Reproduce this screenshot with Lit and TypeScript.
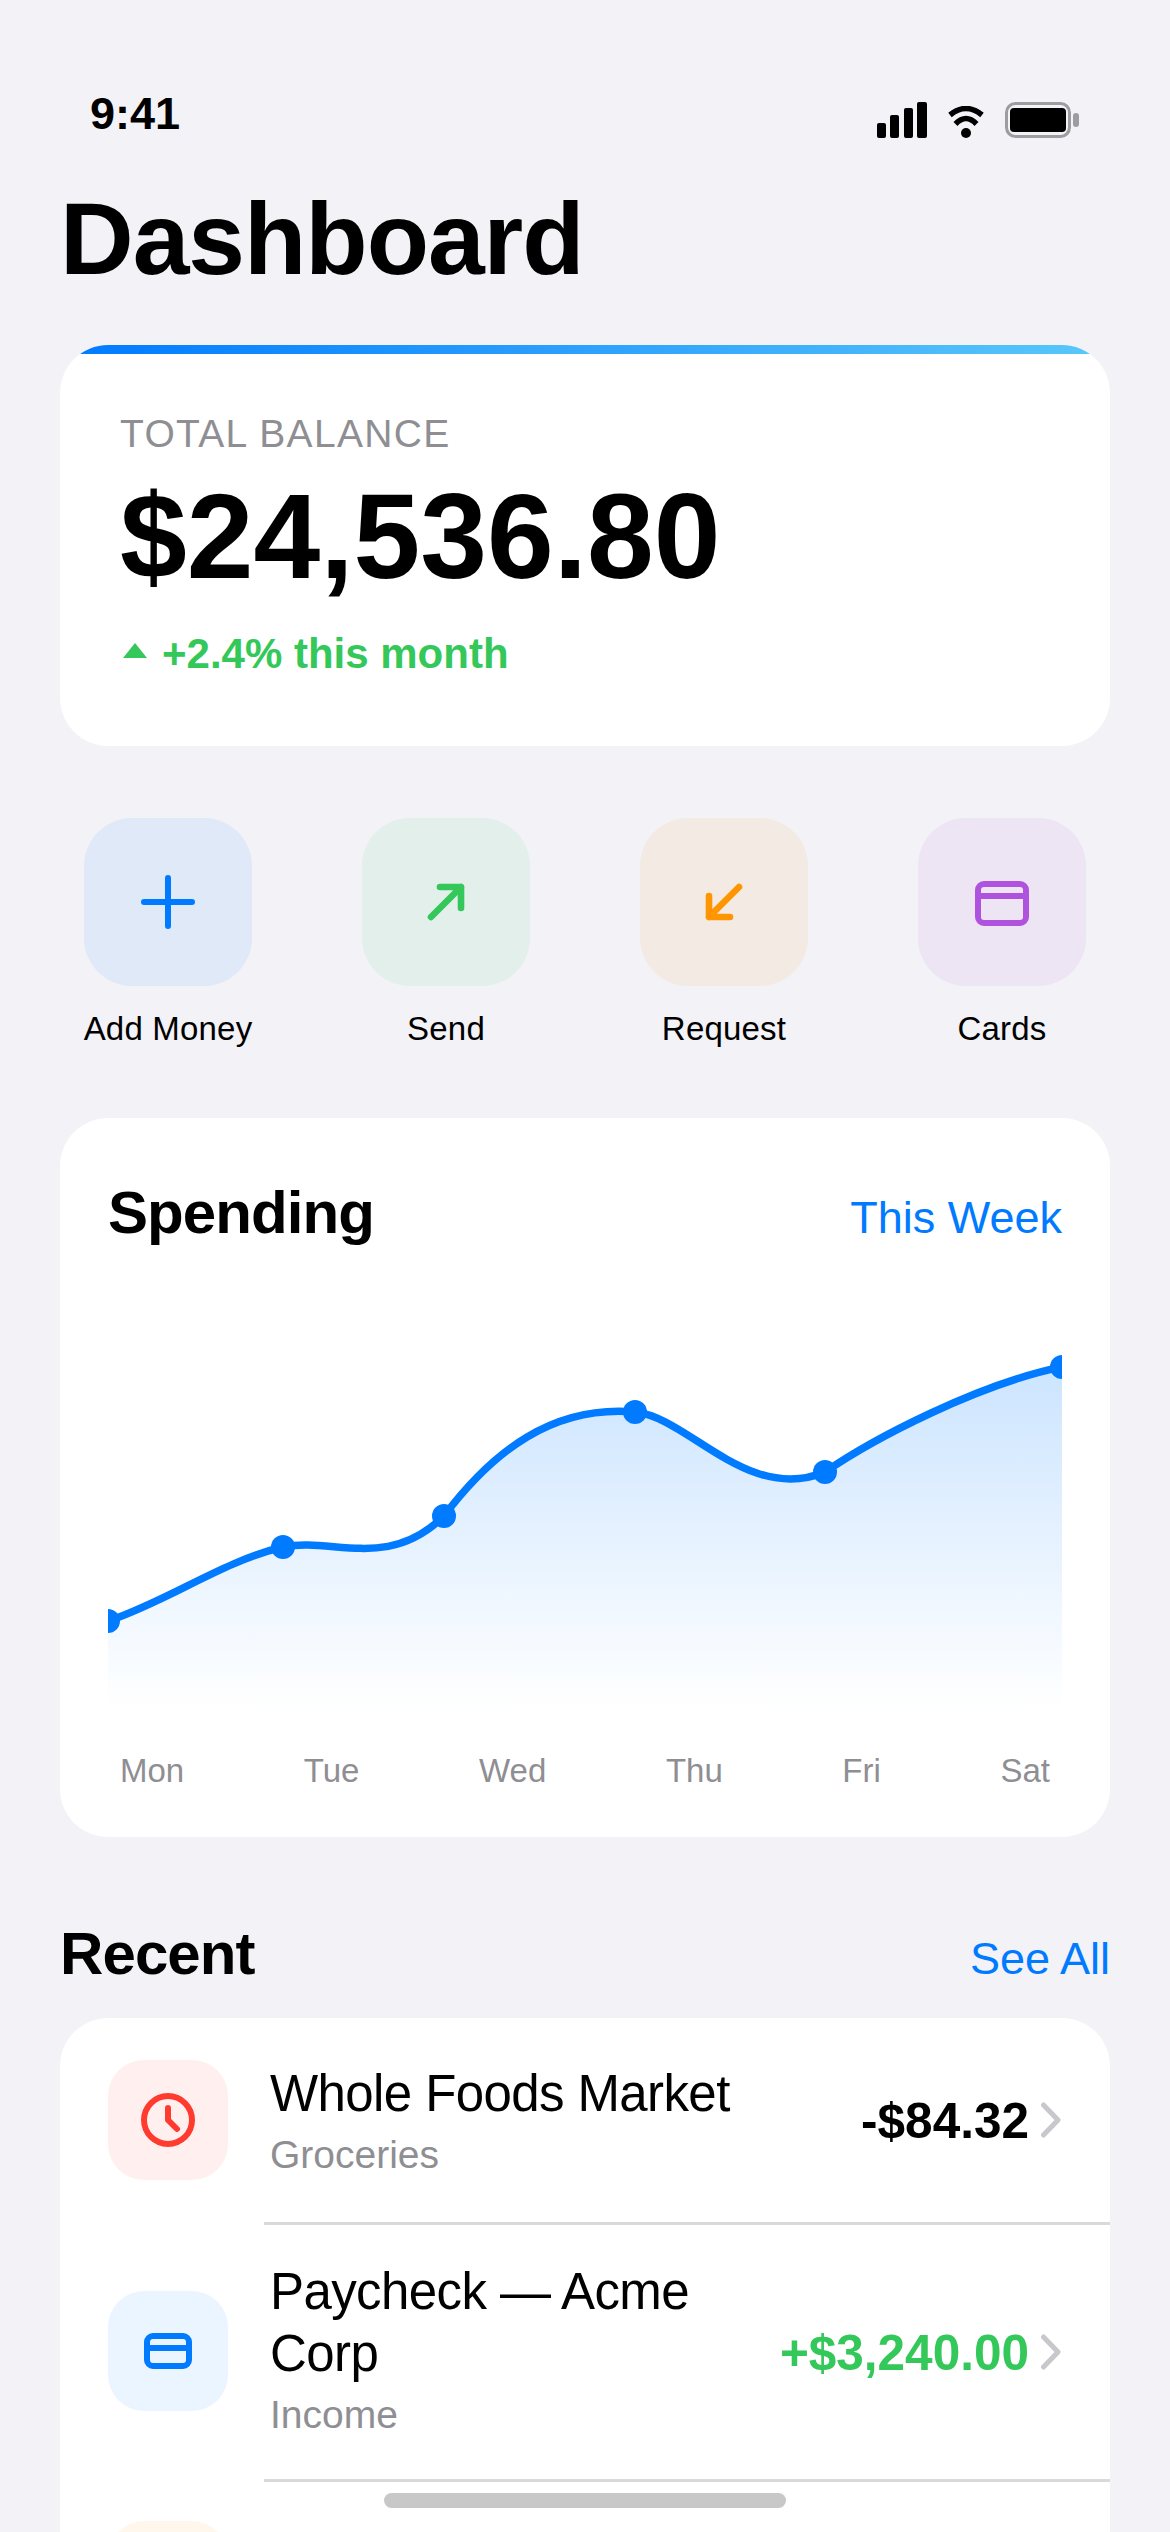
import { LitElement, html, css, svg } from "lit";
import { customElement } from "lit/decorators.js";

const W = 954;
const BOTTOM = 370;
const CURVE =
  "M0 282 C60 262 115 222 175 208 C225 198 280 232 336 177 C385 112 445 66 527 73 C580 78 640 165 717 133 C765 100 870 45 954 28";
const POINTS: [number, number][] = [
  [0, 282],
  [175, 208],
  [336, 177],
  [527, 73],
  [717, 133],
  [954, 28],
];
const DAYS = ["Mon", "Tue", "Wed", "Thu", "Fri", "Sat"];

const icon = (body: unknown) => html`<svg class="glyph" viewBox="0 0 24 24">${body}</svg>`;

const ACTIONS = [
  { label: "Add Money", tint: "blue", body: svg`<path d="M12 4v16M4 12h16" />` },
  { label: "Send", tint: "green", body: svg`<path stroke-width="2.2" d="M7 17 17 7M10 7h7v7" />` },
  { label: "Request", tint: "orange", body: svg`<path stroke-width="2.2" d="M17 7 7 17M7 10v7h7" />` },
  {
    label: "Cards",
    tint: "purple",
    body: svg`<rect x="4" y="6" width="16" height="13" rx="2" /><path d="M4 10h16" />`,
  },
];

const chevron = html`<svg class="chev" viewBox="0 0 24 36"><path d="M5.5 3 20 18 5.5 33" /></svg>`;

@customElement("app-root")
export class AppRoot extends LitElement {
  static styles = css`
    :host {
      display: block;
      position: relative;
      width: 1170px;
      height: 2532px;
      overflow: hidden;
      background: #f2f2f7;
      color: #000;
      font-family: "Liberation Sans", Arial, sans-serif;
    }
    .status {
      display: flex;
      justify-content: space-between;
      padding: 88px 91px 0 90px;
    }
    .time {
      font-size: 45px;
      font-weight: 700;
    }
    .status-icons {
      display: flex;
      align-items: flex-end;
      height: 50px;
      gap: 21px;
    }
    .status-icons svg {
      display: block;
    }
    .title {
      margin: 41px 0 47px 60px;
      font-size: 102px;
      font-weight: 700;
      letter-spacing: -1.02px;
      line-height: 117px;
    }
    .card {
      margin: 0 60px;
      background: #fff;
      border-radius: 48px;
      overflow: hidden;
    }
    .stripe {
      height: 9px;
      background: linear-gradient(90deg, #007aff, #5ac8fa);
    }
    .balance-body {
      padding: 58px 60px 68px;
    }
    .balance-label {
      font-size: 39px;
      letter-spacing: 1.3px;
      color: #8e8e93;
    }
    .balance-amount {
      margin-top: 11px;
      font-size: 120px;
      font-weight: 700;
    }
    .delta {
      display: flex;
      align-items: center;
      gap: 12px;
      margin-top: 25px;
      font-size: 42px;
      font-weight: 700;
      color: #34c759;
    }
    .delta svg {
      display: block;
      width: 30px;
      height: 15px;
      margin-top: -8px;
      fill: #34c759;
    }
    .actions {
      display: flex;
      justify-content: space-between;
      margin: 72px 0 70px;
      padding: 0 84px;
    }
    .action {
      display: flex;
      flex-direction: column;
      align-items: center;
      gap: 24px;
      width: 168px;
      font-size: 33px;
      letter-spacing: 0.2px;
      white-space: nowrap;
    }
    .tile {
      display: flex;
      align-items: center;
      justify-content: center;
      flex: none;
      width: 168px;
      height: 168px;
      border-radius: 48px;
    }
    .glyph {
      display: block;
      width: 72px;
      height: 72px;
      fill: none;
      stroke: currentColor;
      stroke-width: 2;
      stroke-linecap: round;
      stroke-linejoin: round;
    }
    .blue {
      color: #007aff;
      background: rgba(0, 122, 255, 0.08);
    }
    .green {
      color: #34c759;
      background: rgba(52, 199, 89, 0.08);
    }
    .orange {
      color: #ff9500;
      background: rgba(255, 149, 0, 0.08);
    }
    .purple {
      color: #af52de;
      background: rgba(175, 82, 222, 0.08);
    }
    .red {
      color: #ff3b30;
      background: rgba(255, 59, 48, 0.08);
    }
    .chart-body {
      padding: 60px 48px 47px;
    }
    .head {
      display: flex;
      align-items: baseline;
      justify-content: space-between;
    }
    .head h2 {
      margin: 0;
      font-size: 60px;
      font-weight: 700;
      letter-spacing: -0.9px;
    }
    .link {
      font-size: 45px;
      color: #007aff;
    }
    .chart {
      display: block;
      width: 954px;
      height: 376px;
      margin: 92px 0 37px;
    }
    .days {
      display: flex;
      justify-content: space-between;
      padding: 0 12px;
      font-size: 33px;
      color: #8e8e93;
    }
    .recent-head {
      margin: 82px 60px 30px;
    }
    .row {
      display: flex;
      align-items: center;
      gap: 42px;
      padding: 42px 48px;
    }
    .row.next {
      padding-top: 39px;
    }
    .small-tile {
      display: flex;
      align-items: center;
      justify-content: center;
      flex: none;
      width: 120px;
      height: 120px;
      border-radius: 36px;
    }
    .info {
      flex: 1;
      min-width: 0;
    }
    .multi .info {
      margin-top: -6px;
    }
    .multi .small-tile {
      margin-bottom: 3px;
    }
    .name {
      font-size: 51px;
      line-height: 62px;
      letter-spacing: -0.6px;
    }
    .sub {
      margin-top: 8px;
      font-size: 39px;
      color: #8e8e93;
    }
    .amount-wrap {
      display: flex;
      align-items: center;
      gap: 9px;
      flex: none;
    }
    .amount {
      font-size: 49.5px;
      font-weight: 700;
    }
    .amount.pos {
      color: #34c759;
    }
    .chev {
      display: block;
      width: 24px;
      height: 36px;
      fill: none;
      stroke: #c7c7cc;
      stroke-width: 5;
      stroke-linecap: round;
      stroke-linejoin: round;
    }
    .sep {
      height: 3px;
      margin-left: 204px;
      background: #d9d9db;
    }
    .home {
      position: absolute;
      left: 384px;
      bottom: 24px;
      width: 402px;
      height: 15px;
      border-radius: 8px;
      background: #c8c8c8;
    }
  `;

  render() {
    return html`
      <div class="status">
        <div class="time">9:41</div>
        <div class="status-icons">
          <svg width="50" height="36" viewBox="0 0 50 36" fill="#000">
            <rect x="0" y="21" width="9" height="15" rx="2" />
            <rect x="13" y="13" width="9" height="23" rx="2" />
            <rect x="27" y="6" width="9" height="30" rx="2" />
            <rect x="40" y="0" width="10" height="36" rx="2" />
          </svg>
          <svg width="36" height="32" viewBox="0 0 36 32" fill="none" stroke="#000" stroke-width="5.5">
            <path d="M2 9Q18-4 34 9" />
            <path d="M7.5 18Q18 7 28.5 18" />
            <circle cx="18" cy="27" r="5" fill="#000" stroke="none" />
          </svg>
          <svg width="74" height="36" viewBox="0 0 74 36">
            <rect x="1.5" y="1.5" width="63" height="33" rx="9" fill="none" stroke="#9c9ca1" stroke-width="3" />
            <rect x="5" y="6" width="56" height="24" rx="4" fill="#000" />
            <rect x="68" y="11" width="6" height="14" rx="3" fill="#9c9ca1" />
          </svg>
        </div>
      </div>

      <div class="title">Dashboard</div>

      <section class="card">
        <div class="stripe"></div>
        <div class="balance-body">
          <div class="balance-label">TOTAL BALANCE</div>
          <div class="balance-amount">$24,536.80</div>
          <div class="delta">
            <svg viewBox="0 0 30 15"><path d="M15 0 27 15H3Z" /></svg>
            <span>+2.4% this month</span>
          </div>
        </div>
      </section>

      <div class="actions">
        ${ACTIONS.map(
          (a) => html`<div class="action">
            <div class="tile ${a.tint}">${icon(a.body)}</div>
            <span>${a.label}</span>
          </div>`
        )}
      </div>

      <section class="card">
        <div class="chart-body">
          <div class="head">
            <h2>Spending</h2>
            <span class="link">This Week</span>
          </div>
          <svg class="chart" viewBox="0 0 954 376">
            <defs>
              <linearGradient id="area" gradientUnits="userSpaceOnUse" x1="0" y1="28" x2="0" y2="${BOTTOM}">
                <stop offset="0" stop-color="#007aff" stop-opacity="0.2" />
                <stop offset="1" stop-color="#007aff" stop-opacity="0" />
              </linearGradient>
            </defs>
            <path d="${CURVE} L${W} ${BOTTOM} L0 ${BOTTOM}Z" fill="url(#area)" />
            <path d=${CURVE} fill="none" stroke="#007aff" stroke-width="7.5" stroke-linecap="round" />
            ${POINTS.map(([x, y]) => svg`<circle cx=${x} cy=${y} r="12" fill="#007aff" />`)}
          </svg>
          <div class="days">${DAYS.map((d) => html`<span>${d}</span>`)}</div>
        </div>
      </section>

      <div class="head recent-head">
        <h2>Recent</h2>
        <span class="link">See All</span>
      </div>

      <section class="card">
        <div class="row">
          <div class="small-tile red">
            ${icon(svg`<circle cx="12" cy="12" r="8" /><path d="M12 8v4l3 3" />`)}
          </div>
          <div class="info">
            <div class="name">Whole Foods Market</div>
            <div class="sub">Groceries</div>
          </div>
          <div class="amount-wrap"><span class="amount">-$84.32</span>${chevron}</div>
        </div>
        <div class="sep"></div>
        <div class="row multi">
          <div class="small-tile blue">
            ${icon(svg`<rect x="5" y="7" width="14" height="10" rx="2" /><path d="M5 11h14" />`)}
          </div>
          <div class="info">
            <div class="name">Paycheck — Acme Corp</div>
            <div class="sub">Income</div>
          </div>
          <div class="amount-wrap"><span class="amount pos">+$3,240.00</span>${chevron}</div>
        </div>
        <div class="sep"></div>
        <div class="row next">
          <div class="small-tile orange"></div>
        </div>
      </section>

      <div class="home"></div>
    `;
  }
}
